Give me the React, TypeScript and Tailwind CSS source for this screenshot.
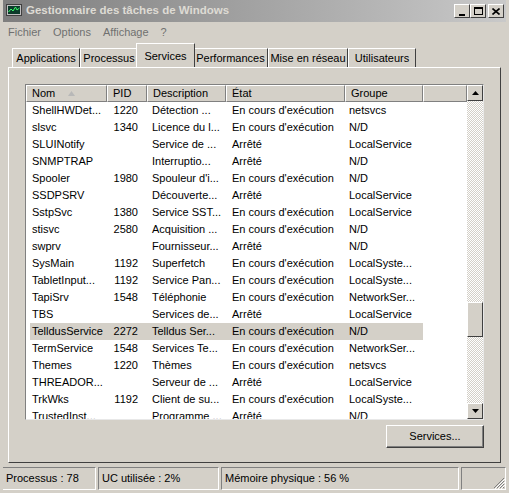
import React from "react";

type Row = { nom: string; pid: string; desc: string; etat: string; groupe: string; sel?: boolean };

const RUN = "En cours d'exécution";
const STOP = "Arrêté";

const rows: Row[] = [
    { nom: "ShellHWDet...", pid: "1220", desc: "Détection ...", etat: RUN, groupe: "netsvcs" },
    { nom: "slsvc", pid: "1340", desc: "Licence du l...", etat: RUN, groupe: "N/D" },
    { nom: "SLUINotify", pid: "", desc: "Service de ...", etat: STOP, groupe: "LocalService" },
    { nom: "SNMPTRAP", pid: "", desc: "Interruptio...", etat: STOP, groupe: "N/D" },
    { nom: "Spooler", pid: "1980", desc: "Spouleur d'i...", etat: RUN, groupe: "N/D" },
    { nom: "SSDPSRV", pid: "", desc: "Découverte...", etat: STOP, groupe: "LocalService" },
    { nom: "SstpSvc", pid: "1380", desc: "Service SST...", etat: RUN, groupe: "LocalService" },
    { nom: "stisvc", pid: "2580", desc: "Acquisition ...", etat: RUN, groupe: "N/D" },
    { nom: "swprv", pid: "", desc: "Fournisseur...", etat: STOP, groupe: "N/D" },
    { nom: "SysMain", pid: "1192", desc: "Superfetch", etat: RUN, groupe: "LocalSyste..." },
    { nom: "TabletInput...", pid: "1192", desc: "Service Pan...", etat: RUN, groupe: "LocalSyste..." },
    { nom: "TapiSrv", pid: "1548", desc: "Téléphonie", etat: RUN, groupe: "NetworkSer..." },
    { nom: "TBS", pid: "", desc: "Services de...", etat: STOP, groupe: "LocalService" },
    { nom: "TelldusService", pid: "2272", desc: "Telldus Ser...", etat: RUN, groupe: "N/D", sel: true },
    { nom: "TermService", pid: "1548", desc: "Services Te...", etat: RUN, groupe: "NetworkSer..." },
    { nom: "Themes", pid: "1220", desc: "Thèmes", etat: RUN, groupe: "netsvcs" },
    { nom: "THREADOR...", pid: "", desc: "Serveur de ...", etat: STOP, groupe: "LocalService" },
    { nom: "TrkWks", pid: "1192", desc: "Client de su...", etat: RUN, groupe: "LocalSyste..." },
    { nom: "TrustedInst...", pid: "", desc: "Programme ...", etat: STOP, groupe: "N/D" },
];

const raised = "border border-t-white border-l-white border-r-[#404040] border-b-[#404040]";

const WinButton = ({ children }: { children: React.ReactNode }) => (
    <div className={`w-[16px] h-[14px] bg-[#d4d0c8] ${raised} flex items-center justify-center`}>
        {children}
    </div>
);

const HeaderCell = ({ label, w, arrow }: { label: string; w: string; arrow?: boolean }) => (
    <div className={`${w} h-full shrink-0 bg-[#d4d0c8] border-r border-b border-r-[#808080] border-b-[#808080] border-l border-t border-l-white border-t-white flex items-center pl-[5px] whitespace-nowrap overflow-hidden`}>
        {label}
        {arrow && (
            <svg className="ml-[13px]" width="7" height="5" viewBox="0 0 7 5">
                <path d="M3.5 0 L7 5 L0 5 Z" fill="#b8b8b8" />
            </svg>
        )}
    </div>
);

const Tab = ({ label, w, active }: { label: string; w: string; active?: boolean }) => (
    <div
        className={
            active
                ? `${w} h-[24px] -mx-[2px] relative z-10 bg-[#d4d0c8] border-t border-l border-t-white border-l-white border-r border-r-[#404040] flex items-start justify-center pt-[4px] whitespace-nowrap`
                : `${w} h-[19px] mt-[5px] bg-[#d4d0c8] border-t border-l border-t-white border-l-white border-r border-r-[#404040] flex items-center justify-center whitespace-nowrap`
        }
    >
        {label}
    </div>
);

export default function App() {
    return (
        <div className="w-[509px] h-[493px] bg-[#d4d0c8] font-['Liberation_Sans',Arial,sans-serif] text-[11px] text-black flex flex-col border-l-[3px] border-r-[3px] border-b-[2px] border-[#d4d0c8] overflow-hidden select-none">
            {/* title bar */}
            <div className="h-[22px] shrink-0 bg-gradient-to-r from-[#7e7e7e] to-[#c9c9c9] flex items-center pl-[3px] pr-[2px]">
                <svg width="16" height="14" viewBox="0 0 16 14">
                    <rect x="0.5" y="0.5" width="15" height="11" fill="#c0c0c0" stroke="#404040" />
                    <rect x="2" y="2" width="12" height="8" fill="#0b3b2a" />
                    <path d="M2.5 8 L5 5 L7 7 L9.5 3 L11 6 L13.5 4" stroke="#3cff6a" strokeWidth="1" fill="none" />
                    <rect x="5" y="12" width="6" height="2" fill="#808080" />
                </svg>
                <span className="ml-[4px] font-bold text-[11.5px] text-[#dedbd4]">Gestionnaire des tâches de Windows</span>
                <div className="ml-auto flex items-center">
                    <WinButton>
                        <div className="w-[6px] h-[2px] bg-black mt-[7px] -ml-[1px]" />
                    </WinButton>
                    <WinButton>
                        <div className="w-[9px] h-[8px] border border-black border-t-2" />
                    </WinButton>
                    <div className="ml-[2px]">
                        <WinButton>
                            <svg width="8" height="7" viewBox="0 0 8 7">
                                <path d="M0.5 0.5 L7.5 6.5 M7.5 0.5 L0.5 6.5" stroke="black" strokeWidth="1.6" />
                            </svg>
                        </WinButton>
                    </div>
                </div>
            </div>

            {/* menu */}
            <div className="h-[20px] shrink-0 flex items-center text-[#707070] pl-[5px] gap-[12px]">
                <span>Fichier</span>
                <span>Options</span>
                <span>Affichage</span>
                <span>?</span>
            </div>

            {/* tabs */}
            <div className="h-[25px] shrink-0 flex items-end pl-[9px] pt-[1px]">
                <Tab label="Applications" w="w-[68px]" />
                <Tab label="Processus" w="w-[58px]" />
                <Tab label="Services" w="w-[59px]" active />
                <Tab label="Performances" w="w-[75px]" />
                <Tab label="Mise en réseau" w="w-[80px]" />
                <Tab label="Utilisateurs" w="w-[68px]" />
            </div>

            {/* panel */}
            <div className="mx-[5px] h-[396px] shrink-0 border border-t-white border-l-white border-r-[#404040] border-b-[#404040] pt-[16px] pl-[16px] flex flex-col">
                <div className="w-[459px] h-[336px] border border-[#808080] border-b-[#e8e8e8] border-r-[#e8e8e8] bg-white flex overflow-hidden">
                    <div className="w-[441px] flex flex-col overflow-hidden">
                        <div className="h-[17px] shrink-0 flex">
                            <HeaderCell label="Nom" w="w-[81px]" arrow />
                            <HeaderCell label="PID" w="w-[40px]" />
                            <HeaderCell label="Description" w="w-[79px]" />
                            <HeaderCell label="État" w="w-[119px]" />
                            <HeaderCell label="Groupe" w="w-[78px]" />
                            <HeaderCell label="" w="w-[44px]" />
                        </div>
                        {rows.map((r) => (
                            <div key={r.nom} className="h-[17px] shrink-0 flex pl-[4px]">
                                <div className={`flex h-full items-center ${r.sel ? "bg-[#d4d0c8]" : ""}`}>
                                    <div className="w-[77px] pl-[2px] whitespace-nowrap overflow-hidden">{r.nom}</div>
                                    <div className="w-[40px] pr-[9px] text-right">{r.pid}</div>
                                    <div className="w-[79px] pl-[5px] whitespace-nowrap overflow-hidden">{r.desc}</div>
                                    <div className="w-[119px] pl-[6px] whitespace-nowrap overflow-hidden">{r.etat}</div>
                                    <div className="w-[78px] pl-[4px] whitespace-nowrap overflow-hidden">{r.groupe}</div>
                                </div>
                            </div>
                        ))}
                    </div>
                    {/* scrollbar */}
                    <div className="w-[16px] h-full flex flex-col">
                        <div className={`h-[16px] shrink-0 bg-[#d4d0c8] ${raised} flex items-center justify-center`}>
                            <svg width="7" height="4" viewBox="0 0 7 4"><path d="M3.5 0 L7 4 L0 4 Z" fill="black" /></svg>
                        </div>
                        <div className="flex-1 bg-[repeating-conic-gradient(#d4d0c8_0_25%,#ffffff_0_50%)] bg-[length:2px_2px]">
                            <div className={`mt-[201px] h-[35px] bg-[#d4d0c8] ${raised}`} />
                        </div>
                        <div className={`h-[16px] shrink-0 bg-[#d4d0c8] ${raised} flex items-center justify-center`}>
                            <svg width="7" height="4" viewBox="0 0 7 4"><path d="M0 0 L7 0 L3.5 4 Z" fill="black" /></svg>
                        </div>
                    </div>
                </div>
                <div className="w-[459px] flex justify-end mt-[5px]">
                    <button className="w-[98px] h-[23px] bg-[#d4d0c8] border border-t-white border-l-white border-r-[#404040] border-b-[#404040] shadow-[inset_-1px_-1px_0_#808080] flex items-center justify-center">
                        Services...
                    </button>
                </div>
            </div>

            {/* status bar */}
            <div className="mt-[4px] h-[23px] shrink-0 flex gap-[2px] -ml-[1px]">
                <div className="w-[94px] border border-[#808080] border-b-white border-r-white flex items-center pl-[3px]">Processus : 78</div>
                <div className="w-[121px] border border-[#808080] border-b-white border-r-white flex items-center pl-[3px]">UC utilisée : 2%</div>
                <div className="w-[238px] border border-[#808080] border-b-white border-r-white flex items-center pl-[3px]">Mémoire physique : 56 %</div>
                <div className="flex-1 border border-[#808080] border-b-white border-r-white flex items-end justify-end">
                    <svg width="12" height="12" viewBox="0 0 12 12">
                        <path d="M11 1 L1 11 M11 4 L4 11 M11 7 L7 11 M11 10 L10 11" stroke="#808080" strokeWidth="1" />
                        <path d="M12 2 L2 12 M12 5 L5 12 M12 8 L8 12" stroke="white" strokeWidth="1" />
                    </svg>
                </div>
            </div>
        </div>
    );
}
